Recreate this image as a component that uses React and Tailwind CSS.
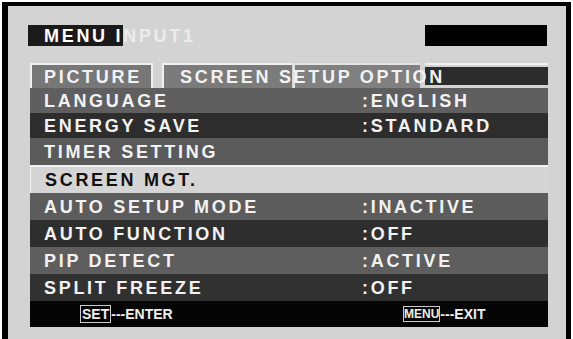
import React from 'react';

const rows = [
    { label: 'LANGUAGE', value: ':ENGLISH', bg: 'bg-[#5f5f5f]', h: 'h-[25px]' },
    { label: 'ENERGY SAVE', value: ':STANDARD', bg: 'bg-[#2d2d2d]', h: 'h-[25px]' },
    { label: 'TIMER SETTING', value: '', bg: 'bg-[#5a5a5a]', h: 'h-[27px]' },
    { label: 'SCREEN MGT.', value: '', bg: 'bg-[#d5d5d5]', h: 'h-[28px]', active: true },
    { label: 'AUTO SETUP MODE', value: ':INACTIVE', bg: 'bg-[#5c5c5c]', h: 'h-[27px]' },
    { label: 'AUTO FUNCTION', value: ':OFF', bg: 'bg-[#2e2e2e]', h: 'h-[27px]' },
    { label: 'PIP DETECT', value: ':ACTIVE', bg: 'bg-[#5e5e5e]', h: 'h-[27px]' },
    { label: 'SPLIT FREEZE', value: ':OFF', bg: 'bg-[#313131]', h: 'h-[27px]' },
];

const MenuRow = ({ row }) => (
    <div
        className={`${row.h} ${row.bg} flex items-center pl-[14px] ${
            row.active ? 'text-[#111] border-t-2 border-l border-[#f2f2f2]' : 'text-[#f2f2f2]'
        }`}
    >
        <span className="w-[318px] whitespace-nowrap">{row.label}</span>
        <span className="whitespace-nowrap">{row.value}</span>
    </div>
);

const App = () => {
    return (
        <div
            className="w-[573px] h-[339px] bg-white pt-[2px] px-[2px] overflow-hidden"
            style={{ fontFamily: '"Liberation Sans", Arial, sans-serif' }}
        >
            <div className="h-full border-l-[6px] border-t-[4px] border-r-[5px] border-black bg-[#d3d3d3] pl-[22px] pr-[18px] pt-[19px] font-bold text-[18px] tracking-[2.7px]">
                {/* Header */}
                <div className="flex justify-between items-center h-[21px]">
                    <div className="flex items-center h-full -ml-[2px] leading-none">
                        <span className="bg-[#1a1a1a] text-white h-full flex items-center pl-[16px]">MENU I</span>
                        <span className="text-[#ececec]">NPUT1</span>
                    </div>
                    <div className="w-[122px] h-full bg-black mr-[1px]" />
                </div>

                {/* Tabs */}
                <div className="flex items-stretch h-[25px] mt-[17px] text-[#f2f2f2]">
                    <div className="w-[123px] bg-[#777] border-t-2 border-x-2 border-[#f0f0f0] flex items-center pl-[12px] leading-none">
                        PICTURE
                    </div>
                    <div className="w-[130px] ml-[9px] bg-[#7b7b7b] border-t-2 border-l-2 border-[#f0f0f0] flex items-center pl-[16px] leading-none">
                        <span className="relative z-10 whitespace-nowrap">SCREEN SETUP OPTION</span>
                    </div>
                    <div className="w-[127px] ml-[1px] bg-[#808080] border-t-2 border-l-2 border-[#e4e4e4]" />
                    <div className="flex-1 ml-[5px] border-t-2 border-[#f0f0f0] pt-[2px] pb-[3px]">
                        <div className="h-full bg-[#2c2c2c]" />
                    </div>
                </div>

                {/* Rows */}
                <div className="flex flex-col leading-none">
                    {rows.map((row) => (
                        <MenuRow key={row.label} row={row} />
                    ))}
                </div>

                {/* Footer */}
                <div className="h-[26px] bg-[#050505] flex items-center pl-[50px] text-[14px] tracking-normal text-[#eee] leading-none">
                    <div className="w-[323px] flex items-center">
                        <span className="border border-[#ccc] px-[1px] py-[1px]">SET</span>
                        <span>---ENTER</span>
                    </div>
                    <div className="flex items-center">
                        <span className="border border-[#ccc] px-0 py-[1px] text-[12px]">MENU</span>
                        <span>---EXIT</span>
                    </div>
                </div>
            </div>
        </div>
    );
};

export default App;
